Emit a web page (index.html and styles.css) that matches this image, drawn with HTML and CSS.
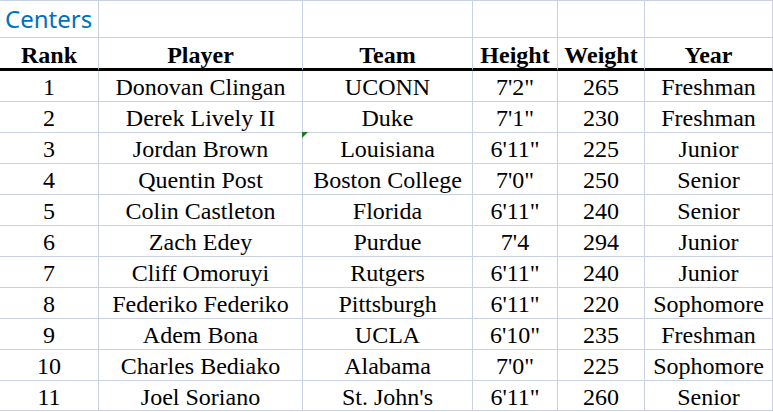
FILE: index.html
```html
<!DOCTYPE html>
<html>
<head>
<meta charset="utf-8">
<link rel="stylesheet" href="styles.css">
</head>
<body>
<div class="roster">
  <p class="cell title">Centers</p><p class="cell top"></p><p class="cell top"></p><p class="cell top"></p><p class="cell top"></p><p class="cell top"></p>
  <p class="cell head">Rank</p><p class="cell head">Player</p><p class="cell head">Team</p><p class="cell head">Height</p><p class="cell head">Weight</p><p class="cell head">Year</p>
  <p class="cell">1</p><p class="cell">Donovan Clingan</p><p class="cell">UCONN</p><p class="cell">7'2"</p><p class="cell">265</p><p class="cell">Freshman</p>
  <p class="cell">2</p><p class="cell">Derek Lively II</p><p class="cell">Duke</p><p class="cell">7'1"</p><p class="cell">230</p><p class="cell">Freshman</p>
  <p class="cell">3</p><p class="cell">Jordan Brown</p><p class="cell flag">Louisiana</p><p class="cell">6'11"</p><p class="cell">225</p><p class="cell">Junior</p>
  <p class="cell">4</p><p class="cell">Quentin Post</p><p class="cell">Boston College</p><p class="cell">7'0"</p><p class="cell">250</p><p class="cell">Senior</p>
  <p class="cell">5</p><p class="cell">Colin Castleton</p><p class="cell">Florida</p><p class="cell">6'11"</p><p class="cell">240</p><p class="cell">Senior</p>
  <p class="cell">6</p><p class="cell">Zach Edey</p><p class="cell">Purdue</p><p class="cell">7'4</p><p class="cell">294</p><p class="cell">Junior</p>
  <p class="cell">7</p><p class="cell">Cliff Omoruyi</p><p class="cell">Rutgers</p><p class="cell">6'11"</p><p class="cell">240</p><p class="cell">Junior</p>
  <p class="cell">8</p><p class="cell">Federiko Federiko</p><p class="cell">Pittsburgh</p><p class="cell">6'11"</p><p class="cell">220</p><p class="cell">Sophomore</p>
  <p class="cell">9</p><p class="cell">Adem Bona</p><p class="cell">UCLA</p><p class="cell">6'10"</p><p class="cell">235</p><p class="cell">Freshman</p>
  <p class="cell">10</p><p class="cell">Charles Bediako</p><p class="cell">Alabama</p><p class="cell">7'0"</p><p class="cell">225</p><p class="cell">Sophomore</p>
  <p class="cell">11</p><p class="cell">Joel Soriano</p><p class="cell">St. John's</p><p class="cell">6'11"</p><p class="cell">260</p><p class="cell">Senior</p>
</div>
</body>
</html>
```
FILE: styles.css
```css
html, body {
  margin: 0;
  padding: 0;
  background: #ffffff;
}
.roster {
  display: grid;
  grid-template-columns: 99px 204px 170px 85px 87px 128px;
  grid-template-rows: 38px 33px repeat(10, 31px) 30px;
  width: 773px;
  color: #000;
}
p {
  font-family: "Liberation Serif", "Times New Roman", serif;
  font-size: 24px;
  margin: 0;
}
.cell {
  display: block;
  box-sizing: border-box;
  border-right: 1px solid #c9d0e1;
  border-bottom: 1px solid #c9d0e1;
  padding-top: 2px;
  line-height: 28px;
  text-align: center;
  white-space: nowrap;
}
.top {
  border-top: 1px solid #c9d0e1;
}
p.title {
  border-top: 1px solid #c9d0e1;
  text-align: left;
  padding-left: 5px;
  padding-top: 3px;
  font-family: "Noto Sans", "Open Sans", sans-serif;
  line-height: 30px;
  color: #0070c0;
}
.head {
  font-weight: bold;
  padding-top: 3px;
  border-bottom: 3px solid #000;
}
.flag {
  position: relative;
}
.flag::before {
  content: "";
  position: absolute;
  left: -1px;
  top: -1px;
  width: 0;
  height: 0;
  border-top: 6px solid #1e7a1e;
  border-right: 6px solid transparent;
}
```
